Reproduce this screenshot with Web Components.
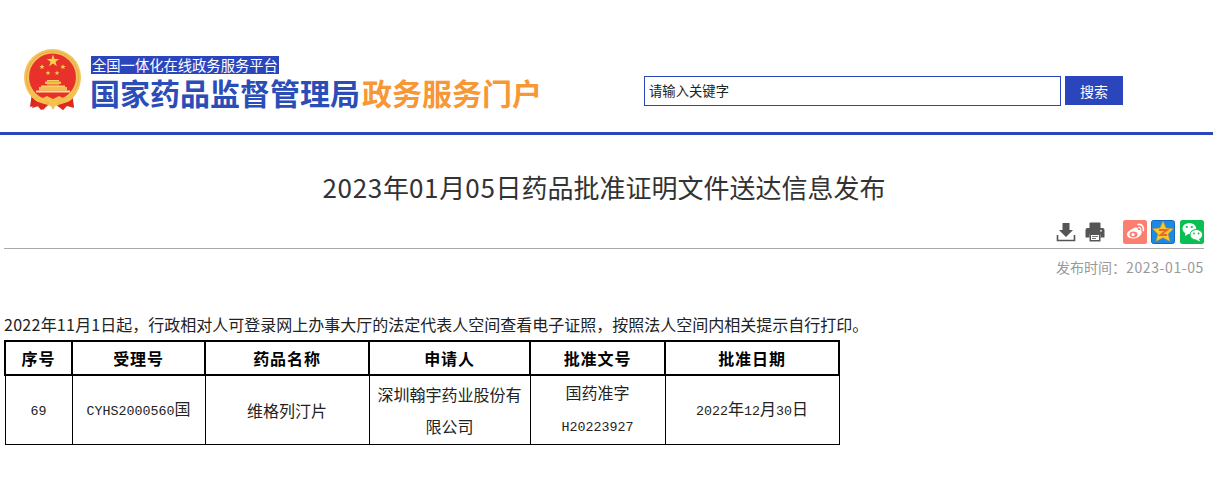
<!DOCTYPE html>
<html lang="zh-CN">
<head>
<meta charset="utf-8">
<title>药品批准证明文件送达信息发布</title>
<style>
  html, body { margin: 0; padding: 0; background: #fff; }
  body { font-family: "Noto Sans CJK SC", "Liberation Sans", sans-serif; color: #222; }
  .num { letter-spacing: .7px; }
  .dt { letter-spacing: .6px; }
  .nt { letter-spacing: .3px; }
</style>
</head>
<body>
<site-header></site-header>
<doc-title><span class="num">2023</span>年<span class="num">01</span>月<span class="num">05</span>日药品批准证明文件送达信息发布</doc-title>
<doc-tools></doc-tools>
<doc-date>发布时间：<span class="dt">2023-01-05</span></doc-date>
<doc-note><span class="nt">2022</span>年<span class="nt">11</span>月<span class="nt">1</span>日起，行政相对人可登录网上办事大厅的法定代表人空间查看电子证照，按照法人空间内相关提示自行打印。</doc-note>
<doc-table></doc-table>

<script>
class SiteEmblem extends HTMLElement {
  constructor() {
    super();
    this.attachShadow({ mode: 'open' });
    const star = (cx, cy, r) => {
      let pts = [];
      for (let i = 0; i < 10; i++) {
        const a = -Math.PI / 2 + i * Math.PI / 5;
        const rr = i % 2 ? r * 0.4 : r;
        pts.push((cx + rr * Math.cos(a)).toFixed(1) + ',' + (cy + rr * Math.sin(a)).toFixed(1));
      }
      return `<polygon points="${pts.join(' ')}" fill="#f9d24e"/>`;
    };
    this.shadowRoot.innerHTML = `
      <style>
        :host { display: block; width: 58px; height: 62px; flex-shrink: 0; }
        svg { display: block; }
      </style>
      <svg width="58" height="62" viewBox="0 0 58 62">
        <path d="M9 44 L7 58 L14 56 L18 61 L25 56 L33 56 L40 61 L44 56 L51 58 L49 44 Z" fill="#d8261c"/>
        <circle cx="29.500" cy="28.500" r="28.500" fill="#f3c35c"/>
        <circle cx="29.500" cy="28.500" r="26" fill="none" stroke="#e6ab3f" stroke-width="1"/>
        <circle cx="29.500" cy="28" r="23.500" fill="#e8312a"/>
        ${star(30, 12, 6.500)}${star(19, 18, 2.800)}${star(40, 18, 2.800)}${star(25, 24, 2.600)}${star(34, 24, 2.600)}
        <rect x="24" y="31" width="12" height="1.500" fill="#f9d36a"/>
        <rect x="22" y="32.500" width="16" height="2.500" fill="#f5bf50"/>
        <rect x="24" y="35" width="12" height="1.500" fill="#f08a3c"/>
        <rect x="18" y="36.500" width="24" height="1.500" fill="#f9d36a"/>
        <rect x="16" y="38" width="28" height="3.500" fill="#f5bf50"/>
        <rect x="13" y="41.500" width="34" height="2" fill="#fae09a"/>
        <path d="M9 40 C12 49 18 51 24 47 L30 50 L36 47 C42 51 48 49 51 40 L54 42 C50 52 43 56 36 53 L30 56 L24 53 C17 56 10 52 6 42 Z" fill="#f5c04c"/>
        <path d="M26 54 L30 61 L34 54 Z" fill="#f5c04c"/>
        <path d="M11 52 L9 59 L16 57 L20 61 L25 56 Z M49 52 L51 59 L44 57 L40 61 L35 56 Z" fill="#de2a22"/>
      </svg>`;
  }
}
customElements.define('site-emblem', SiteEmblem);

class SiteSearch extends HTMLElement {
  constructor() {
    super();
    this.attachShadow({ mode: 'open' });
    this.shadowRoot.innerHTML = `
      <style>
        :host { display: flex; gap: 4px; font-family: "Noto Sans CJK SC", sans-serif; }
        .box {
          box-sizing: border-box; width: 417px; height: 30px;
          border: 1px solid #2b45bd; padding: 0 4px 2px;
          display: flex; align-items: center;
          font-size: 13.330px; color: #222;
        }
        .btn {
          width: 58px; height: 29px; background: #2b45bd; color: #fff;
          display: flex; align-items: center; justify-content: center;
          font-size: 14px;
        }
      </style>
      <div class="box">请输入关键字</div>
      <div class="btn">搜索</div>`;
  }
}
customElements.define('site-search', SiteSearch);

class SiteHeader extends HTMLElement {
  constructor() {
    super();
    this.attachShadow({ mode: 'open' });
    this.shadowRoot.innerHTML = `
      <style>
        :host {
          display: flex; align-items: flex-start; box-sizing: border-box;
          height: 135px; padding: 49px 90px 0 23px;
          border-bottom: 3px solid #2b45bd;
          font-family: "Noto Sans CJK SC", sans-serif;
        }
        .brand { margin-left: 10px; padding-top: 7px; }
        .tag {
          display: block; width: fit-content;
          background: #2b45bd; color: #fff;
          font-size: 14.300px; line-height: 18px; padding: 0 1px; white-space: nowrap;
        }
        .name {
          font-family: "Liberation Sans", "Noto Sans CJK SC", sans-serif;
          font-size: 30px; line-height: 34px; font-weight: 700; color: #2b4db8;
          white-space: nowrap; margin: 4px 0 0 -1px;
        }
        .name span { color: #f79735; margin-left: 2px; }
        site-search { margin-left: auto; margin-top: 27px; }
      </style>
      <site-emblem></site-emblem>
      <div class="brand">
        <div class="tag">全国一体化在线政务服务平台</div>
        <div class="name">国家药品监督管理局<span>政务服务门户</span></div>
      </div>
      <site-search></site-search>`;
  }
}
customElements.define('site-header', SiteHeader);

class DocTitle extends HTMLElement {
  constructor() {
    super();
    this.attachShadow({ mode: 'open' });
    this.shadowRoot.innerHTML = `
      <style>
        :host {
          display: block; text-align: center; padding: 33px 5px 0 0;
          font-size: 26px; line-height: 38px; color: #333;
        }
      </style>
      <slot></slot>`;
  }
}
customElements.define('doc-title', DocTitle);

class DocTools extends HTMLElement {
  constructor() {
    super();
    this.attachShadow({ mode: 'open' });
    this.shadowRoot.innerHTML = `
      <style>
        :host {
          display: flex; align-items: center; justify-content: flex-end; box-sizing: border-box;
          margin: 14px 9px 0 4px; height: 29px; padding-bottom: 4px;
          border-bottom: 1px solid #aaa;
        }
        svg { display: block; }
        .print { margin-left: 9px; }
        .share { margin-left: 18px; }
        .share + .share { margin-left: 4px; }
        .share:last-child { margin-left: 5px; }
      </style>
      <svg width="20" height="20" viewBox="0 0 20 20">
        <path d="M6.500 1 H13.500 V8 H17 L10 15 L3 8 H6.500 Z" fill="#555"/>
        <path d="M1.500 13 V18.500 H18.500 V13" fill="none" stroke="#555" stroke-width="1.600"/>
      </svg>
      <svg class="print" width="20" height="20" viewBox="0 0 20 20">
        <path d="M4.500 1.500 A1 1 0 0 1 5.500 .5 H14.500 A1 1 0 0 1 15.500 1.500 V6 H4.500 Z" fill="#555"/>
        <path d="M2.500 6 H17.500 A2 2 0 0 1 19.500 8 V15.500 H15.500 V12 H4.500 V15.500 H0.500 V8 A2 2 0 0 1 2.500 6 Z" fill="#555"/>
        <path d="M4.500 11.500 H15.500 V19.500 H4.500 Z" fill="#555"/>
        <path d="M6 13 H14 V18 H6 Z" fill="#fff"/>
        <path d="M7 14.500 H13 M7 16.500 H11" stroke="#777" stroke-width="1"/>
        <circle cx="16" cy="8.800" r="1" fill="#ddd"/>
      </svg>
      <svg class="share" width="24" height="24" viewBox="0 0 24 24">
        <rect width="24" height="24" rx="2.500" fill="#fb7f70"/>
        <path d="M10 8.500 C13 6.800 15.300 7.500 15 10 C18 9.500 19.500 11.500 18.500 13.500 C17 17.500 11 19.500 7 18 C3.500 16.800 3 13.500 5.500 11.500 C7 10 8.500 9.200 10 8.500 Z" fill="#fff"/>
        <ellipse cx="10.500" cy="14.500" rx="4" ry="3" fill="#fb7f70"/>
        <circle cx="10" cy="14.500" r="1.600" fill="#fff"/>
        <path d="M15 4.500 C18.800 3.800 21.200 7 20.300 10.500" fill="none" stroke="#fff" stroke-width="1.600" stroke-linecap="round"/>
        <path d="M15.500 7.500 C17 7.300 18 8.400 17.800 9.800" fill="none" stroke="#fff" stroke-width="1.200" stroke-linecap="round"/>
      </svg>
      <svg class="share" width="24" height="24" viewBox="0 0 24 24">
        <rect x=".5" y=".5" width="23" height="23" rx="2" fill="#1b8ae6" stroke="#1668bd"/>
        <path d="M12 1 L15.100 8 L22.500 8.700 L17.200 13.900 L19 21.500 L12 17.700 L5 21.500 L6.800 13.900 L1.500 8.700 L8.900 8 Z" fill="#fbc52e" stroke="#c98a1a" stroke-width="0.500"/>
        <path d="M8 10 H16 L9.500 15 H16" fill="none" stroke="#e8682a" stroke-width="1.800"/>
      </svg>
      <svg class="share" width="24" height="24" viewBox="0 0 24 24">
        <rect width="24" height="24" rx="2.500" fill="#0abf52"/>
        <ellipse cx="9.300" cy="8.500" rx="6.800" ry="5.600" fill="#fff"/>
        <path d="M5.500 12 L5 16 L9 13.500 Z" fill="#fff"/>
        <ellipse cx="16.300" cy="14.800" rx="6.300" ry="5.300" fill="#fff" stroke="#0abf52" stroke-width="1"/>
        <path d="M18.500 18.500 L20.300 21.500 L16 19.800 Z" fill="#fff"/>
        <circle cx="6.800" cy="7" r="1.100" fill="#0abf52"/><circle cx="11.800" cy="7" r="1.100" fill="#0abf52"/>
        <circle cx="14" cy="13.500" r="0.900" fill="#0abf52"/><circle cx="18.500" cy="13.500" r="0.900" fill="#0abf52"/>
      </svg>`;
  }
}
customElements.define('doc-tools', DocTools);

class DocDate extends HTMLElement {
  constructor() {
    super();
    this.attachShadow({ mode: 'open' });
    this.shadowRoot.innerHTML = `
      <style>
        :host {
          display: block; text-align: right; margin: 8px 9px 0 0;
          font-size: 14px; line-height: 20px; color: #999;
        }
      </style>
      <slot></slot>`;
  }
}
customElements.define('doc-date', DocDate);

class DocNote extends HTMLElement {
  constructor() {
    super();
    this.attachShadow({ mode: 'open' });
    this.shadowRoot.innerHTML = `
      <style>
        :host {
          display: block; margin: 37px 0 0 4px;
          font-size: 16px; line-height: 20px; color: #222; white-space: nowrap;
        }
      </style>
      <slot></slot>`;
  }
}
customElements.define('doc-note', DocNote);

class DocTable extends HTMLElement {
  constructor() {
    super();
    this.attachShadow({ mode: 'open' });
    const head = ['序号', '受理号', '药品名称', '申请人', '批准文号', '批准日期'];
    const widths = [67, 133, 164, 161, 135, 174];
    this.shadowRoot.innerHTML = `
      <style>
        :host { display: block; margin: 6px 0 0 4px; font-family: "Noto Sans CJK SC", sans-serif; }
        table { border-collapse: collapse; table-layout: fixed; width: 834px; color: #222; }
        th, td { padding: 0 6px; text-align: center; border: 1px solid #000; box-sizing: border-box; }
        th { height: 34px; font-size: 16px; letter-spacing: .9px; font-weight: 700; border-width: 2px; color: #000; }
        td { height: 66px; font-size: 16px; line-height: 32px; font-weight: 400; }
        .l { font-family: "Liberation Mono", monospace; font-size: 13.330px; }
      </style>
      <table>
        <colgroup>${widths.map(w => `<col style="width:${w}px">`).join('')}</colgroup>
        <tr>${head.map(h => `<th>${h}</th>`).join('')}</tr>
        <tr>
          <td><span class="l">69</span></td>
          <td><span class="l">CYHS2000560</span>国</td>
          <td>维格列汀片</td>
          <td>深圳翰宇药业股份有限公司</td>
          <td>国药准字<br><span class="l">H20223927</span></td>
          <td><span class="l">2022</span>年<span class="l">12</span>月<span class="l">30</span>日</td>
        </tr>
      </table>`;
  }
}
customElements.define('doc-table', DocTable);
</script>
</body>
</html>
